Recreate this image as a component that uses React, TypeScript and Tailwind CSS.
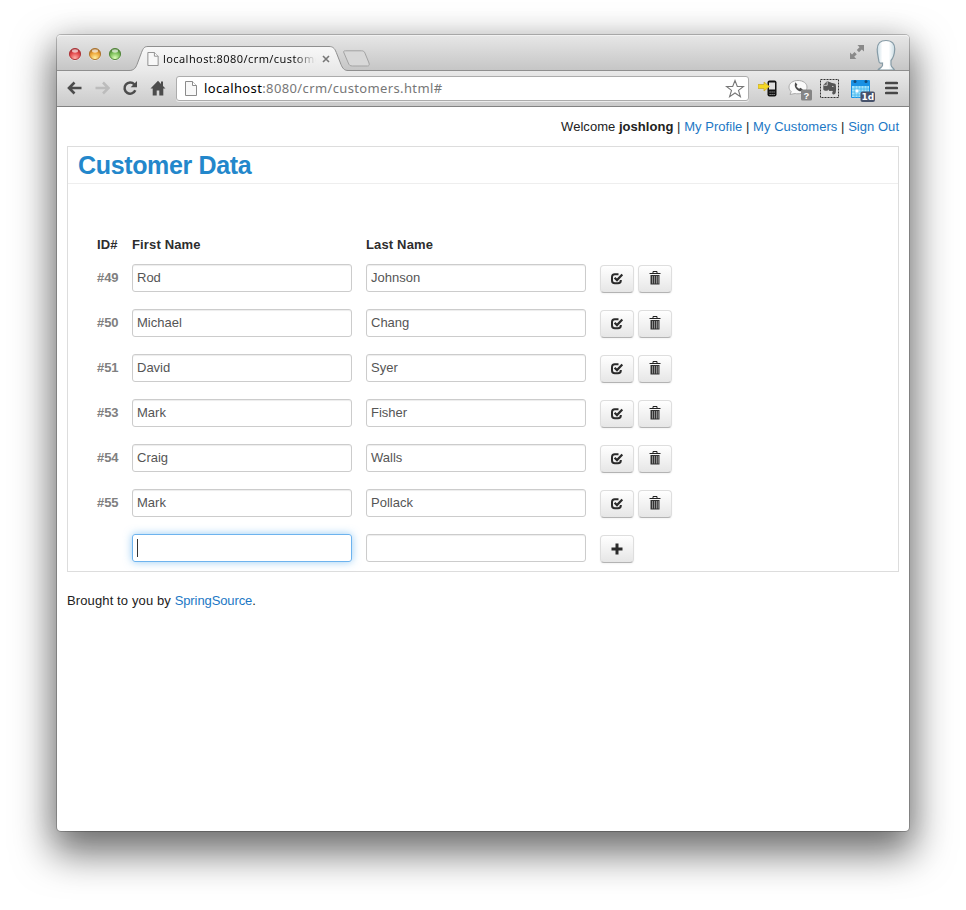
import React from "react";

const customers = [
  { id: 49, first: "Rod", last: "Johnson" },
  { id: 50, first: "Michael", last: "Chang" },
  { id: 51, first: "David", last: "Syer" },
  { id: 53, first: "Mark", last: "Fisher" },
  { id: 54, first: "Craig", last: "Walls" },
  { id: 55, first: "Mark", last: "Pollack" },
];

function Light({ id, dark, mid, glow }: { id: string; dark: string; mid: string; glow: string }) {
  return (
    <svg width="14" height="14" viewBox="0 0 14 14" className="shrink-0">
      <defs>
        <radialGradient id={id} cx="50%" cy="85%" r="75%">
          <stop offset="0" stopColor={glow} />
          <stop offset=".65" stopColor={mid} />
          <stop offset="1" stopColor={dark} />
        </radialGradient>
      </defs>
      <circle cx="7" cy="7.6" r="6" fill="#f5f5f5" />
      <circle cx="7" cy="7" r="5.6" fill={`url(#${id})`} stroke={dark} strokeWidth=".9" />
      <ellipse cx="7" cy="4" rx="3" ry="1.7" fill="#fff" opacity=".65" />
    </svg>
  );
}

function PageIcon({ className }: { className?: string }) {
  return (
    <svg width="12" height="15" viewBox="0 0 12 15" className={className}>
      <path d="M.5.5H7.500L11.500 4.500V14.500H.5z" fill="#f8f8f8" stroke="#8b8b8b" />
      <path d="M7.500.5v4h4" fill="#fff" stroke="#8b8b8b" />
    </svg>
  );
}

function TitleBar() {
  return (
    <div className="relative flex h-9 items-start rounded-t-[4px] border-t border-[#f2f2f2] bg-linear-to-b from-[#e6e6e6] to-[#c5c5c5] pl-[11px]">
      <div className="absolute inset-x-0 bottom-0 h-px bg-[#8f8f8f]" />
      <div className="mt-[11px] flex gap-[6px]">
        <Light id="red" dark="#a82f33" mid="#e2474a" glow="#ffb0a8" />
        <Light id="amber" dark="#a9702a" mid="#eda436" glow="#fff0a0" />
        <Light id="green" dark="#4d8136" mid="#79bd57" glow="#dcffb8" />
      </div>
      <div className="relative ml-[7px] mt-[9px] flex h-[26px] w-[218px] items-center">
        <svg width="220" height="26" viewBox="0 0 220 26" className="absolute left-0 top-0">
          <defs>
            <linearGradient id="tab" x1="0" y1="0" x2="0" y2="1">
              <stop offset="0" stopColor="#f8f8f8" />
              <stop offset="1" stopColor="#e9e9e9" />
            </linearGradient>
          </defs>
          <path d="M0 25.5C5 25.5 6.5 23 8 19.5L12.5 7.5C14.300 2.800 15.500 1.500 19 1.500H200C203.500 1.500 205.500 2.800 207.300 7.500L212 19.500C213.500 23 215 25.500 219 25.500V26H0Z" fill="url(#tab)" />
          <path d="M0 25.5C5 25.5 6.5 23 8 19.5L12.5 7.5C14.300 2.800 15.500 1.500 19 1.500H200C203.500 1.500 205.500 2.800 207.300 7.500L212 19.500C213.500 23 215 25.500 219 25.500" fill="none" stroke="#8f8f8f" />
        </svg>
        <PageIcon className="relative ml-[18px] mt-px h-[14px] w-[12px]" />
        <div className="relative ml-[4px] mt-[2px] w-[153px] overflow-hidden whitespace-nowrap font-['Noto_Sans',sans-serif] text-[11px] leading-[16px] tracking-[0.42px] text-[#111] mask-r-from-86% mask-r-to-100%">
          localhost:8080/crm/customers
        </div>
        <svg width="8" height="8" viewBox="0 0 8 8" className="relative ml-[6px] mt-[2px]">
          <path d="M1 1l6 6M7 1l-6 6" stroke="#777" strokeWidth="1.6" />
        </svg>
      </div>
      <svg width="29" height="17" viewBox="0 0 29 17" className="-ml-[5px] mt-[14px]">
        <path d="M3.500.8H19.500C21.500.8 22.300 1.500 23 3.200L27 13C27.700 15 27 16 25.500 16H10.500C8 16 7 15 6.300 13L2 3C1.300 1.500 1.500.8 3.500.8Z" fill="#d8d8d8" stroke="#a3a3a3" />
      </svg>
      <svg width="16" height="16" viewBox="0 0 16 16" className="ml-auto mr-[11px] mt-[8px]">
        <path d="M8.500 1H15V7.500L12.800 5.500L10 8.300L7.800 6L10.500 3.200zM1 8.500L3 10.500L5.500 8L7.800 10.200L5.200 12.800L7.300 15H1z" fill="#898989" />
      </svg>
      <svg width="20" height="31" viewBox="0 0 20 31" className="mr-[13px] mt-[3px]">
        <defs>
          <linearGradient id="head" x1="0" x2="1">
            <stop offset="0" stopColor="#c9dce5" />
            <stop offset=".3" stopColor="#fff" />
            <stop offset=".65" stopColor="#fff" />
            <stop offset="1" stopColor="#c9dbe3" />
          </linearGradient>
        </defs>
        <path d="M2 31C3 29 6 29 6.500 26.500V24C4.500 24.500 3 24 2.800 22C2.500 19 1.200 15 1.200 10.500C1.200 4.500 4.500 1.500 10 1.500C16 1.500 19 5 18.700 10.500C18.500 15 17.500 18.500 15 21.500V26C15.500 28.500 17.500 29 18.500 31Z" fill="url(#head)" stroke="#869ba6" strokeWidth="1.200" />
      </svg>
    </div>
  );
}

function Toolbar() {
  return (
    <div className="flex h-9 items-center border-b border-[#828282] bg-linear-to-b from-[#e9e9e9] to-[#cbcbcb] pl-[10px]">
      <svg width="16" height="14" viewBox="0 0 16 14" className="-mt-px">
        <path d="M7.500 1.500L2 7l5.500 5.500M2.500 7H14.500" fill="none" stroke="#4c4c4c" strokeWidth="2.600" />
      </svg>
      <svg width="16" height="14" viewBox="0 0 16 14" className="-mt-px ml-3">
        <path d="M8 1.500L13.500 7 8 12.500M13 7H.5" fill="none" stroke="#bcbcbc" strokeWidth="2.500" />
      </svg>
      <svg width="16" height="16" viewBox="0 0 16 16" className="-mt-px ml-[11px]">
        <path d="M12.300 4.300A5.600 5.600 0 1 0 13.300 10.300" fill="none" stroke="#4c4c4c" strokeWidth="2.500" />
        <path d="M15 1v6.300H8.700z" fill="#4c4c4c" />
      </svg>
      <svg width="16" height="16" viewBox="0 0 16 16" className="-mt-px ml-3">
        <path d="M8 .8L.5 8.500h2.200V15.500h4V10.500h2.600v5h4V8.500h2.200L13 6V1.500h-2V4z" fill="#4c4c4c" />
      </svg>
      <div className="ml-[10px] flex h-[25px] w-[573px] shrink-0 items-center rounded-[3px] border border-[#acacac] bg-white pl-2 shadow-[0_1px_0_#ececec]">
        <PageIcon />
        <div className="-mt-[2px] ml-[7px] whitespace-nowrap font-['Noto_Sans',sans-serif] text-[13px] leading-[20px] tracking-[0.37px] text-[#777]">
          <span className="text-black">localhost</span>:8080/crm/customers.html#
        </div>
        <svg width="20" height="20" viewBox="0 0 20 20" className="ml-auto mr-[3px]">
          <path d="M10 1.500l2.300 6h6.200l-5 3.900 1.900 6.300-5.400-3.700-5.400 3.700 1.900-6.300-5-3.900h6.200z" fill="#fff" stroke="#777" strokeWidth="1.100" />
        </svg>
      </div>
      <svg width="20" height="20" viewBox="0 0 20 20" className="-mt-px ml-[9px]">
        <path d="M11.500 2.500h5q2 0 2 2v12q0 2-2 2h-5q-2 0-2-2v-12q0-2 2-2z" fill="#111" />
        <rect x="11" y="4.500" width="6" height="7" fill="#dedede" />
        <path d="M11.500 14h1.200m.8 0h1.200m.8 0h1.200M11.500 16.500h1.200m.8 0h1.200m.8 0h1.200" stroke="#aaa" strokeWidth="1" />
        <path d="M0 6.500h6V4l5.500 4.500L6 13v-2.500H0z" fill="#f4d823" stroke="#c3a52a" strokeWidth=".7" />
      </svg>
      <svg width="25" height="24" viewBox="0 0 25 24" className="ml-[10px] mt-[3px]">
        <path d="M10 2.500c5 0 9 2.700 9 6.600s-4 6.700-9 6.700c-1 0-2 0-2.800-.3L2 16.500l1.200-3C1.700 12.300 1 10.800 1 9.100 1 5.200 5 2.500 10 2.500z" fill="#fafafa" stroke="#aaa" />
        <path d="M7.500 4.200l1.900 2.600-1 1.200c.6 1.300 1.500 2.100 2.800 2.700l1.200-1 2.500 1.900-1.500 1.700c-4.300.3-8.400-4.800-5.900-9.100z" fill="#4b4b4b" />
        <rect x="13" y="11.500" width="11" height="11" rx="1.500" fill="#858585" />
        <text x="18.500" y="20.500" textAnchor="middle" fill="#fff" fontSize="9.500" fontWeight="700" fontFamily="Liberation Sans, sans-serif">?</text>
      </svg>
      <svg width="19" height="19" viewBox="0 0 19 19" className="ml-[7px]">
        <rect x=".5" y=".5" width="18" height="18" fill="#dedede" stroke="#333" strokeDasharray="2 1" />
        <path d="M6.800 2.500L3.300 6v4.500c1.200 1.700 3 1.500 4.500 1l.7-1 .6 1.300c1 .5 2 .3 2.900 0l.9.7-.9 1.400 1 1.600c1.900.2 2.700-.9 2.800-2.500.5-3 .3-6-.2-8-1.800-.7-3.200-.7-4.500-1.200-1.400-1-3-1.600-4.300-1.300z" fill="#555" />
        <path d="M3.500 6.300h3.700V2.800" fill="none" stroke="#d6d6d6" strokeWidth=".9" />
        <path d="M12 7.600q1-.8 1.700.5" fill="none" stroke="#d6d6d6" strokeWidth=".9" />
      </svg>
      <svg width="25" height="24" viewBox="0 0 25 24" className="ml-[12px] mt-[4px]">
        <rect x="0" y="1" width="19" height="18" rx="1" fill="#1991e4" />
        <rect x="1" y="7" width="17" height="11" fill="#a4e2fb" />
        <path d="M1 10h17M1 13h17M1 16h17M4 7v12M7 7v12M10 7v12M13 7v12M16 7v12" stroke="#3fb5ed" strokeWidth=".8" />
        <rect x="4.500" y="10.500" width="3" height="3" fill="#fff" />
        <circle cx="4" cy="2.500" r="1.500" fill="#134b79" />
        <circle cx="15" cy="2.500" r="1.500" fill="#134b79" />
        <rect x="9.500" y="12.500" width="14.500" height="10.500" rx="2" fill="#47526b" />
        <text x="16.800" y="21.400" textAnchor="middle" fill="#fff" fontSize="9" fontWeight="700" fontFamily="DejaVu Sans, sans-serif">1d</text>
      </svg>
      <svg width="13" height="14" viewBox="0 0 13 14" className="-mt-px ml-[9px]">
        <path d="M1.200 2h10.600M1.200 7h10.600M1.200 12h10.600" stroke="#474747" strokeWidth="2.700" strokeLinecap="round" />
      </svg>
    </div>
  );
}

const CheckIcon = () => (
  <svg width="14" height="14" viewBox="0 0 14 14" className="-mt-px">
    <path d="M8.500 2.300H4.800Q2 2.300 2 5.100V8.500Q2 11.300 4.800 11.300H8Q10.800 11.300 10.800 8.500V8" fill="none" stroke="#2b2b2b" strokeWidth="2" />
    <path d="M4.600 5.700l2.400 2.400L12.300 2.500" fill="none" stroke="#2b2b2b" strokeWidth="2.200" />
  </svg>
);

const TrashIcon = () => (
  <svg width="12" height="14" viewBox="0 0 12 14" className="-mt-[2px]">
    <path d="M.5 2.500h11M4 2V.5h4V2" fill="none" stroke="#222" />
    <path d="M1.500 4h9v9.500h-9z" fill="#333" />
    <path d="M3.500 5v7.500M5.500 5v7.500M7.500 5v7.500M9.200 5v7.500" stroke="#a5a5a5" strokeWidth=".8" />
  </svg>
);

const PlusIcon = () => (
  <svg width="12" height="12" viewBox="0 0 12 12" className="-ml-px -mt-px">
    <path d="M6 .5v11M.5 6h11" stroke="#2b2b2b" strokeWidth="3" />
  </svg>
);

function IconButton({ label, children }: { label: string; children: React.ReactNode }) {
  return (
    <button
      aria-label={label}
      className="mt-px flex h-7 w-[34px] items-center justify-center rounded-[4px] border border-[#dedede] border-b-[#b3b3b3] bg-linear-to-b from-white to-[#e6e6e6] shadow-[0_1px_2px_rgba(0,0,0,0.05)]"
    >
      {children}
    </button>
  );
}

function Field({ value, focused }: { value?: string; focused?: boolean }) {
  return (
    <div
      className={
        focused
          ? "mr-[14px] flex h-7 w-[220px] items-center rounded-[3px] border border-[#6db3ee] pl-1 shadow-[0_0_8px_rgba(82,168,236,0.6)]"
          : "mr-[14px] flex h-7 w-[220px] items-center rounded-[3px] border border-[#ccc] pb-px pl-1 text-[#555] shadow-[inset_0_1px_1px_rgba(0,0,0,0.075)]"
      }
    >
      {focused ? <span className="h-[18px] w-px bg-[#333]" /> : value}
    </div>
  );
}

const Link = ({ children }: { children: React.ReactNode }) => (
  <a href="#" className="text-[#1c78c5]">{children}</a>
);

export default function App() {
  return (
    <div className="h-[910px] w-[966px] overflow-hidden bg-white pl-[57px] pt-[35px] font-['Liberation_Sans',Arial,sans-serif] text-[13px] leading-[18px] text-[#333]">
      <div className="h-[796px] w-[852px] rounded-[4px] bg-white shadow-[0_0_0_1px_rgba(0,0,0,0.22),0_18px_38px_5px_rgba(0,0,0,0.55),0_0_30px_rgba(0,0,0,0.08)]">
        <TitleBar />
        <Toolbar />
        <div className="px-[10px] pt-[11px]">
          <div className="flex justify-end whitespace-pre text-[#222]">
            <span className="-mr-[0.04px] tracking-[0.04px]">Welcome <b>joshlong</b> | <Link>My Profile</Link> | <Link>My Customers</Link> | <Link>Sign Out</Link></span>
          </div>
          <div className="mt-[10px] h-[426px] border border-[#ddd]">
            <h1 className="h-[37px] border-b border-[#eee] pl-[10px] text-[25px] font-bold leading-[37px] tracking-[-0.35px] text-[#2387cb]">
              Customer Data
            </h1>
            <div className="flex pl-[29px] pt-[52px] font-bold tracking-[0.15px] text-[#2d2d2d]">
              <span className="w-[35px]">ID#</span>
              <span className="w-[234px]">First Name</span>
              <span>Last Name</span>
            </div>
            <div className="mt-[10px] flex flex-col gap-[17px] pl-[29px]">
              {customers.map((c) => (
                <div key={c.id} className="flex h-7">
                  <span className="w-[35px] pt-[5px] font-bold tracking-[-0.1px] text-[#808080]">#{c.id}</span>
                  <Field value={c.first} />
                  <Field value={c.last} />
                  <div className="flex gap-1">
                    <IconButton label="Save"><CheckIcon /></IconButton>
                    <IconButton label="Delete"><TrashIcon /></IconButton>
                  </div>
                </div>
              ))}
              <div className="flex h-7 pl-[35px]">
                <Field focused />
                <Field />
                <IconButton label="Add"><PlusIcon /></IconButton>
              </div>
            </div>
          </div>
          <p className="mt-[20px] text-[#222]">
            <span className="tracking-[0.12px]">Brought to you by </span>
            <Link><span className="tracking-[-0.1px]">SpringSource</span></Link>.
          </p>
        </div>
      </div>
    </div>
  );
}
